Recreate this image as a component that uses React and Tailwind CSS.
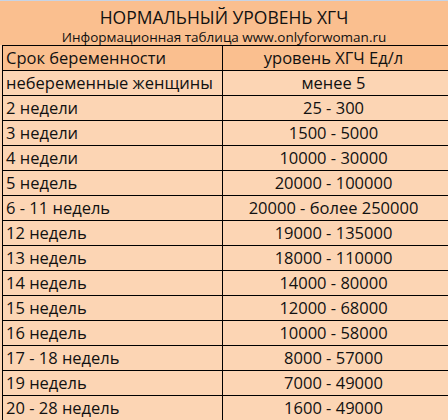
const rows = [
  ['небеременные женщины', 'менее 5'],
  ['2 недели', '25 - 300'],
  ['3 недели', '1500 - 5000'],
  ['4 недели', '10000 - 30000'],
  ['5 недель', '20000 - 100000'],
  ['6 - 11 недель', '20000 - более 250000'],
  ['12 недель', '19000 - 135000'],
  ['13 недель', '18000 - 110000'],
  ['14 недель', '14000 - 80000'],
  ['15 недель', '12000 - 68000'],
  ['16 недель', '10000 - 58000'],
  ['17 - 18 недель', '8000 - 57000'],
  ['19 недель', '7000 - 49000'],
  ['20 - 28 недель', '1600 - 49000'],
];

export default function App() {
  return (
    <div
      className="w-[448px] h-[420px] overflow-hidden bg-[#fcd5b4] text-[#111] border-t border-[#c6d4e6]"
      style={{ fontFamily: '"Open Sans", "Noto Sans", sans-serif' }}
    >
      <div className="h-[44px] bg-[#fabf8f] flex flex-col items-center">
        <div className="text-[17.5px] leading-[22px] mt-[5px]">НОРМАЛЬНЫЙ УРОВЕНЬ ХГЧ</div>
        <div className="text-[13.5px] leading-[16px] mt-[1px]">Информационная таблица www.onlyforwoman.ru</div>
      </div>
      <div className="ml-[2px] border-l border-black">
        <div className="grid grid-cols-[220px_1fr] h-[26px] bg-[#fabf8f] border-y border-black text-[16.5px] leading-[24px]">
          <div className="pl-[3px] border-r border-black whitespace-nowrap">Срок беременности</div>
          <div className="text-center pr-[4px] whitespace-nowrap">уровень ХГЧ Ед/л</div>
        </div>
        {rows.map(([a, b]) => (
          <div key={a} className="grid grid-cols-[220px_1fr] h-[25px] border-b border-black text-[16.5px] leading-[24px]">
            <div className="pl-[3px] border-r border-black whitespace-nowrap">{a}</div>
            <div className="text-center pr-[4px] whitespace-nowrap">{b}</div>
          </div>
        ))}
      </div>
    </div>
  );
}
